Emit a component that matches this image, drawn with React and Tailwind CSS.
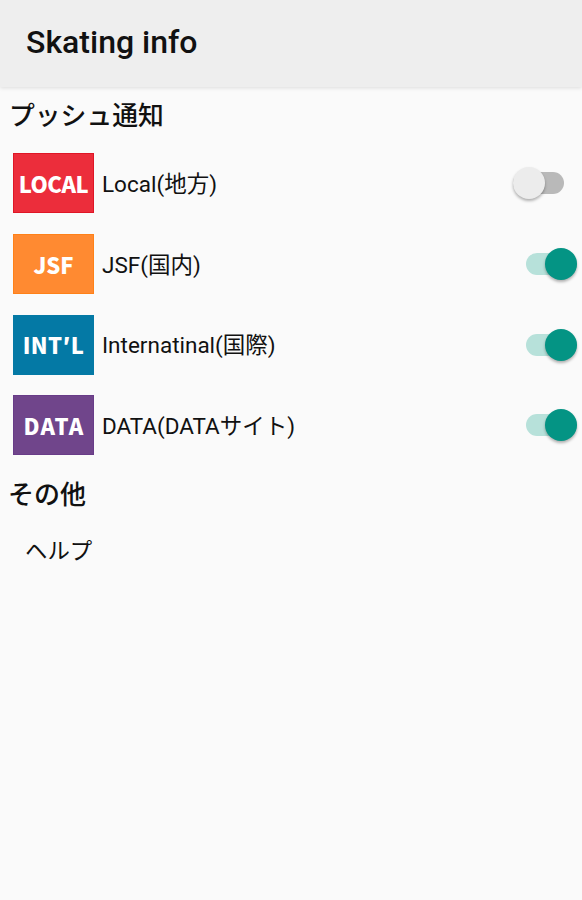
const CHANNELS = [
  { id: 'local', badge: 'LOCAL', label: 'Local(地方)', color: 'bg-[#ec2d3b] border-[#df1626]', text: 'text-[22px] tracking-[-0.5px]', on: false },
  { id: 'jsf', badge: 'JSF', label: 'JSF(国内)', color: 'bg-[#ff8a31] border-[#ff8118]', text: 'text-[22px]', on: true },
  { id: 'intl', badge: 'INT′L', label: 'Internatinal(国際)', color: 'bg-[#0479a5] border-[#0479a5]', text: 'text-[22px] tracking-[0.4px]', on: true },
  { id: 'data', badge: 'DATA', label: 'DATA(DATAサイト)', color: 'bg-[#70458b] border-[#683c88]', text: 'text-[22px] tracking-[1.2px] pl-px', on: true },
]

function Switch({ on }) {
  return (
    <div className={`flex h-[22px] items-center rounded-full ${on ? 'w-[51px] justify-end bg-[#b7e1da]' : 'mr-[13px] w-[51px] bg-[#b9b9b9]'}`}>
      <div className={`size-8 shrink-0 rounded-full shadow-[0_2px_3px_rgba(0,0,0,0.3)] ${on ? 'bg-[#049484]' : 'bg-[#ececec]'}`} />
    </div>
  )
}

function ChannelRow({ channel }) {
  return (
    <div className="flex h-[80.7px] items-center pl-[13px] pr-[5.5px]">
      <div className={`flex h-[60px] w-[81px] items-center justify-center border pb-px ${channel.color}`}>
        <span className={`font-['Noto_Sans_CJK_JP',sans-serif] font-black leading-none text-white ${channel.text}`}>
          {channel.badge}
        </span>
      </div>
      <span className="ml-[8px] flex-1 whitespace-nowrap pt-[3px] text-[22.5px]">{channel.label}</span>
      <Switch on={channel.on} />
    </div>
  )
}

export default function App() {
  return (
    <div className="h-[900px] w-[582px] overflow-hidden bg-[#fafafa] font-[Roboto,'Noto_Sans_CJK_JP',sans-serif] text-[#111111]">
      <header className="flex h-[87px] items-center bg-[#eeeeee] pb-[3px] pl-[26px] shadow-[0_1px_4px_rgba(0,0,0,0.12)]">
        <h1 className="text-[32px] font-medium">Skating info</h1>
      </header>
      <h2 className="flex h-[56px] items-center pl-[9px] pt-[3px] text-[25.8px] font-medium">プッシュ通知</h2>
      {CHANNELS.map((c) => (
        <ChannelRow key={c.id} channel={c} />
      ))}
      <h2 className="flex h-[56px] items-center pl-[8px] pt-[3px] text-[26px] font-medium">その他</h2>
      <div className="flex h-[60px] items-center pl-[25px] text-[22.4px]">ヘルプ</div>
    </div>
  )
}
